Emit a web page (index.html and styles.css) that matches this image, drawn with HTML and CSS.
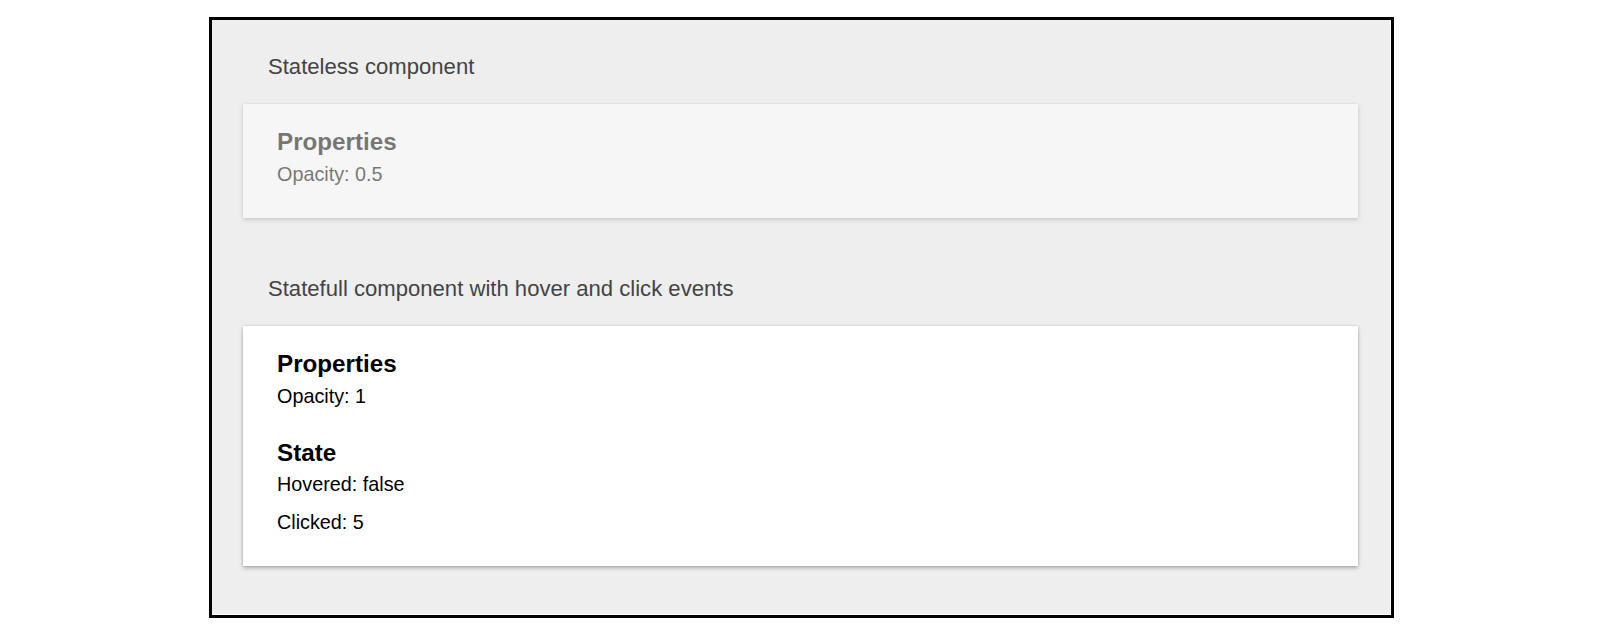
FILE: index.html
```html
<!DOCTYPE html>
<html>
<head>
<meta charset="utf-8">
<link rel="stylesheet" href="styles.css">
</head>
<body>
<div class="frame">
  <h2 class="section-title">Stateless component</h2>
  <div class="card card-faded">
    <h3 class="card-heading">Properties</h3>
    <p class="card-line">Opacity: 0.5</p>
  </div>
  <h2 class="section-title section-title-second">Statefull component with hover and click events</h2>
  <div class="card">
    <h3 class="card-heading">Properties</h3>
    <p class="card-line">Opacity: 1</p>
    <h3 class="card-heading card-heading-group">State</h3>
    <p class="card-line card-line-tight">Hovered: false</p>
    <p class="card-line card-line-spaced">Clicked: 5</p>
  </div>
</div>
</body>
</html>
```

FILE: styles.css
```css
html, body {
  margin: 0;
  padding: 0;
  background: #ffffff;
}

body {
  font-family: "Liberation Sans", Arial, sans-serif;
}

.frame {
  box-sizing: border-box;
  width: 1185px;
  margin: 17px 0 0 209px;
  border: 3px solid #000;
  background: #eeeeee;
  box-shadow: inset -1px -1px 0 #ffffff;
  padding: 34px 33px 49px 31px;
}

.section-title {
  margin: 0 0 25px 25px;
  font-size: 22.1px;
  line-height: 25px;
  font-weight: normal;
  color: #444444;
}

.section-title-second {
  margin-top: 58px;
}

.card {
  background: #ffffff;
  padding: 24px 33px 33px 34px;
  box-shadow: 0 2px 4px rgba(0, 0, 0, 0.28), 0 0 2px rgba(0, 0, 0, 0.12);
  color: #000;
}

.card-faded {
  opacity: 0.5;
}

.card-heading {
  margin: 0;
  font-size: 24.2px;
  line-height: 28px;
  font-weight: bold;
}

.card-heading-group {
  margin-top: 32px;
}

.card-line {
  margin: 7px 0 0 0;
  font-size: 19.8px;
  line-height: 22px;
}

.card-line-tight {
  margin-top: 6px;
}

.card-line-spaced {
  margin-top: 16px;
}
```
